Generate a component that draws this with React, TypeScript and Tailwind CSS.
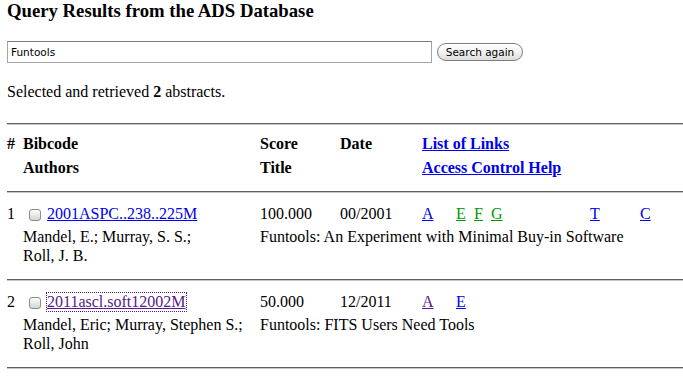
import React from "react";

const Rule = () => (
  <div className="h-[2px] border-t border-t-[#5f5f5f] border-b border-b-[#c9c9c9]" />
);

const Checkbox = () => (
  <span className="inline-block w-[12px] h-[12px] mt-[4px] ml-[6px] mr-[6px] rounded-[3px] border border-[#8a8a8a] bg-gradient-to-b from-[#fdfdfd] to-[#d4d4d4] shrink-0" />
);

const grid = "grid grid-cols-[16px_237px_80px_82px_1fr]";

export default function App() {
  return (
    <div className="w-[683px] h-[383px] overflow-hidden bg-white text-black pl-[7px] font-['Liberation_Serif','Times_New_Roman',serif] text-[16px] leading-[18px]">
      <h3 className="text-[18.72px] leading-[22px] font-bold m-0">
        Query Results from the ADS Database
      </h3>

      <div className="mt-[19px] flex items-center h-[22px]">
        <div className="w-[425px] h-[22px] border border-[#a5a5a5] border-t-[#7a7a7a] bg-white flex items-center pl-[3px] font-['DejaVu_Sans',sans-serif] text-[10.5px] leading-none">
          Funtools
        </div>
        <button className="ml-[5px] w-[86px] h-[18px] rounded-full border border-[#7d7d7d] bg-gradient-to-b from-white via-[#f2f2f2] to-[#dcdcdc] font-['DejaVu_Sans',sans-serif] text-[10.5px] leading-none text-black flex items-center justify-center">
          Search again
        </button>
      </div>

      <p className="mt-[20px]">
        Selected and retrieved <b>2</b> abstracts.
      </p>

      <div className="mt-[22px]">
        <Rule />
      </div>

      <div className={`${grid} pt-[10px] pb-[14px] gap-y-[6px] font-bold`}>
        <div>#</div>
        <div>Bibcode</div>
        <div>Score</div>
        <div>Date</div>
        <div>
          <a className="text-[#0000ee] underline">List of Links</a>
        </div>
        <div />
        <div>Authors</div>
        <div>Title</div>
        <div />
        <div>
          <a className="text-[#0000ee] underline">Access Control Help</a>
        </div>
      </div>

      <Rule />

      <div className={`${grid} pt-[12px] pb-[14px] gap-y-[4px]`}>
        <div>1</div>
        <div className="flex items-start">
          <Checkbox />
          <a className="text-[#0000ee] underline">2001ASPC..238..225M</a>
        </div>
        <div>100.000</div>
        <div>00/2001</div>
        <div className="flex">
          <span className="w-[34px]">
            <a className="text-[#0000ee] underline">A</a>
          </span>
          <span className="w-[18px]">
            <a className="text-[#009900] underline">E</a>
          </span>
          <span className="w-[17px]">
            <a className="text-[#009900] underline">F</a>
          </span>
          <span className="w-[99px]">
            <a className="text-[#009900] underline">G</a>
          </span>
          <span className="w-[50px]">
            <a className="text-[#0000ee] underline">T</a>
          </span>
          <span>
            <a className="text-[#0000ee] underline">C</a>
          </span>
        </div>
        <div />
        <div className="leading-[19px]">
          Mandel, E.; Murray, S. S.;
          <br />
          Roll, J. B.
        </div>
        <div className="col-span-3 leading-[19px]">
          Funtools: An Experiment with Minimal Buy-in Software
        </div>
      </div>

      <Rule />

      <div className={`${grid} pt-[12px] pb-[14px] gap-y-[4px]`}>
        <div>2</div>
        <div className="flex items-start">
          <Checkbox />
          <a className="text-[#551a8b] underline outline outline-1 outline-dotted outline-[#551a8b]">
            2011ascl.soft12002M
          </a>
        </div>
        <div>50.000</div>
        <div>12/2011</div>
        <div className="flex">
          <span className="w-[34px]">
            <a className="text-[#551a8b] underline">A</a>
          </span>
          <span>
            <a className="text-[#0000ee] underline">E</a>
          </span>
        </div>
        <div />
        <div className="leading-[19px]">
          Mandel, Eric; Murray, Stephen S.;
          <br />
          Roll, John
        </div>
        <div className="col-span-3 leading-[19px]">Funtools: FITS Users Need Tools</div>
      </div>

      <Rule />
    </div>
  );
}
